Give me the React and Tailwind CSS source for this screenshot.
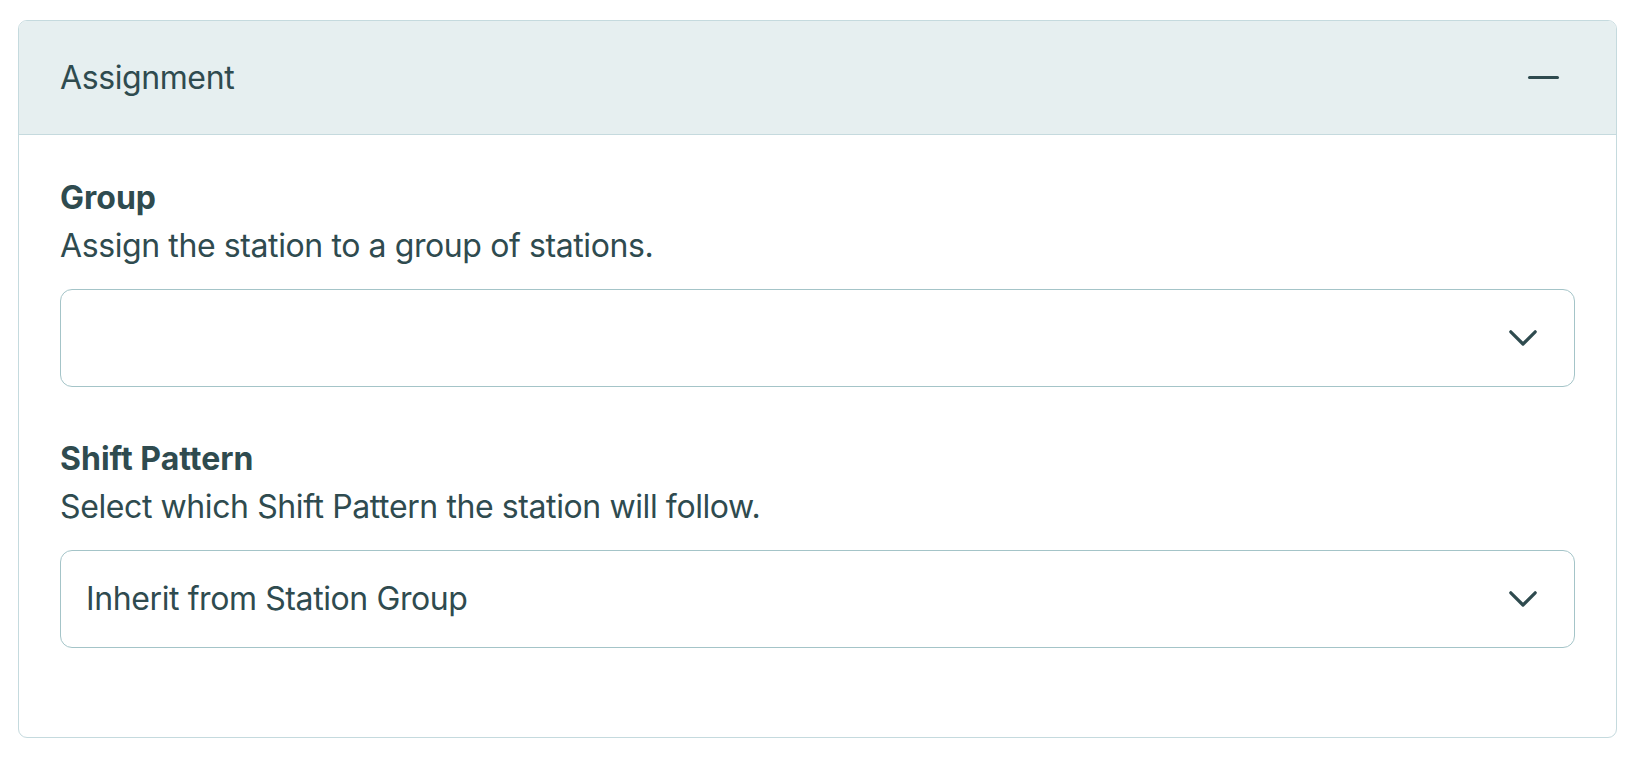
import { useState } from 'react'

function Chevron() {
  return (
    <svg width="28" height="16" viewBox="0 0 28 16" fill="none" className="shrink-0">
      <path d="M1.8 1.8 L14 14 L26.2 1.8" stroke="#2f4b4f" strokeWidth="3.2" strokeLinecap="round" strokeLinejoin="round" />
    </svg>
  )
}

function Select({ value }) {
  return (
    <button
      type="button"
      className="mt-[19px] flex h-[98px] w-full items-center justify-between rounded-[12px] border border-[#a4c4c8] bg-white pl-[25px] pr-[37px] text-left text-[32px] leading-[48px] tracking-[-0.4px] text-[#2f4b4f]"
    >
      <span>{value}</span>
      <Chevron />
    </button>
  )
}

function Field({ title, desc, value, className = '' }) {
  return (
    <div className={className}>
      <div className="text-[32px] font-bold leading-[48px]">{title}</div>
      <div className="text-[32px] leading-[48px] tracking-[-0.4px]">{desc}</div>
      <Select value={value} />
    </div>
  )
}

export default function App() {
  const [open, setOpen] = useState(true)

  return (
    <div className="min-h-screen bg-white pt-[20px] pl-[18px] font-['Inter',sans-serif] text-[#2f4b4f]">
      <div className="w-[1599px] overflow-hidden rounded-[9px] border border-[#c5dade] bg-white">
        <div className="flex h-[114px] items-center justify-between border-b border-[#c5dade] bg-[#e6eff0] pl-[41px] pr-[57px]">
          <span className="text-[32px] leading-[48px] tracking-[-0.4px]">Assignment</span>
          <button type="button" onClick={() => setOpen((v) => !v)} aria-label="Collapse">
            <span className="block h-[3px] w-[31px] rounded-full bg-[#2f4b4f]" />
          </button>
        </div>
        {open && (
          <div className="px-[41px] pt-[39px] pb-[41px]">
            <Field
              title="Group"
              desc="Assign the station to a group of stations."
              value=""
            />
            <Field
              className="mt-[48px] mb-[48px]"
              title="Shift Pattern"
              desc="Select which Shift Pattern the station will follow."
              value="Inherit from Station Group"
            />
          </div>
        )}
      </div>
    </div>
  )
}
